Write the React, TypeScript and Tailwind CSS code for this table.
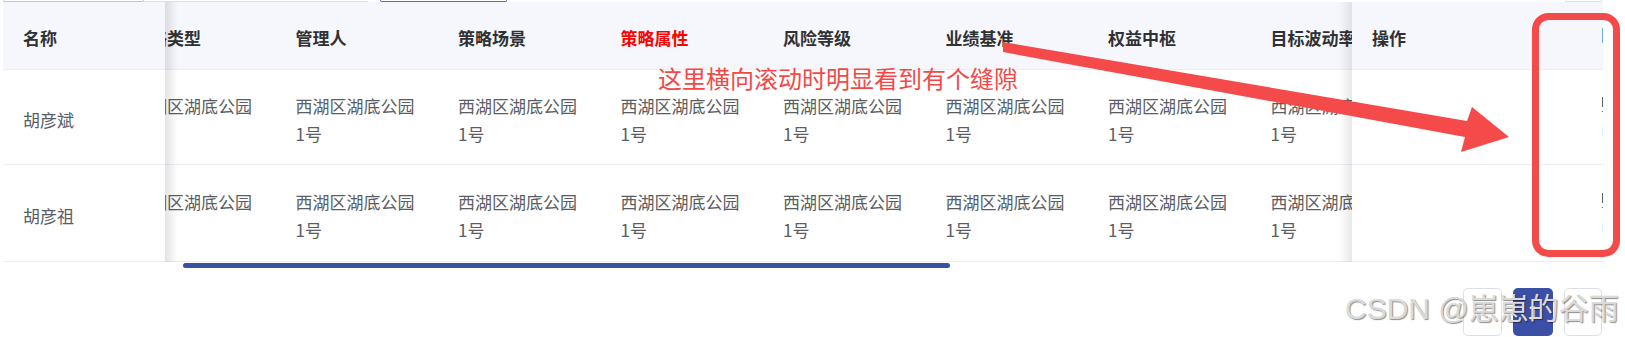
const cols = ['策略类型', '管理人', '策略场景', '策略属性', '风险等级', '业绩基准', '权益中枢', '目标波动率']
const names = ['胡彦斌', '胡彦祖']

const head =
  "flex h-[68px] shrink-0 items-center whitespace-nowrap border-b border-[#ebeef5] bg-[#f5f7fd] px-5 pt-1 text-[17px] font-bold text-[#303133]"
const cell = 'flex shrink-0 items-center border-b border-[#ebeef5] px-5 pt-[5px] text-[17px] leading-[28px] text-[#5a5d63]'
const rowH = ['h-[95px]', 'h-[97px]']

function Address() {
  return (
    <span>
      西湖区湖底公园
      <br />
      1号
    </span>
  )
}

export default function App() {
  return (
    <div className="relative h-[337px] w-[1625px] overflow-hidden bg-white font-['Noto_Sans_CJK_SC','Noto_Sans',sans-serif]">
      {/* bottoms of the filter inputs above */}
      <div className="flex h-[2px]">
        <div className="ml-[3px] w-[141px] rounded-b-[3px] border-x border-b border-[#c0c4cc]" />
        <div className="w-[224px] border-b border-[#dcdfe6]" />
        <div className="ml-[12px] w-[127px] rounded-b-[3px] border-x border-b border-[#4f6bd6]" />
        <div className="ml-auto mr-[23px] w-[37px] rounded-b-[4px] border-x border-b border-[#dcdfe6]" />
      </div>

      <div className="ml-[3px] flex w-[1600px]">
        {/* fixed left */}
        <div className="relative z-10 flex w-[162px] shrink-0 flex-col bg-white">
          <div className={head}>名称</div>
          {names.map((n, i) => (
            <div key={n} className={`${cell} ${rowH[i]}`}>
              {n}
            </div>
          ))}
          <div className="absolute left-full top-0 bottom-0 w-[13px] bg-linear-to-r from-black/[0.11] to-transparent" />
        </div>

        {/* scrolled body */}
        <div className="w-[1187px] shrink-0 overflow-hidden">
          <div className="ml-[-52px] grid w-max grid-cols-[repeat(8,162.5px)]">
            {cols.map((c) => (
              <div key={c} className={`${head} ${c === '策略属性' ? 'text-[#ff0000]' : ''}`}>
                {c}
              </div>
            ))}
            {names.map((n, i) =>
              cols.map((c) => (
                <div key={n + c} className={`${cell} ${rowH[i]}`}>
                  <Address />
                </div>
              ))
            )}
          </div>
        </div>

        {/* fixed right */}
        <div className="relative z-10 flex w-[250px] shrink-0 flex-col bg-white">
          <div className={head}>操作</div>
          <div className={`${cell} ${rowH[0]}`} />
          <div className={`${cell} ${rowH[1]}`} />
          <div className="absolute right-full top-0 bottom-0 w-[13px] bg-linear-to-l from-black/[0.09] to-transparent" />
        </div>

        {/* the 1px gap showing content underneath */}
        <div className="flex w-px shrink-0 flex-col">
          <div className="h-[68px] border-b border-[#ebeef5] bg-[#f5f7fd] pt-[26px]">
            <div className="h-[15px] bg-[#6ab4f5]" />
          </div>
          <div className="h-[95px] border-b border-[#ebeef5] pt-[27px]">
            <div className="h-[10px] bg-[#6a5a78]" />
            <div className="mt-[4px] h-px bg-[#777]" />
            <div className="mt-[14px] h-[10px] bg-[#e3f7fb]" />
          </div>
          <div className="h-[97px] border-b border-[#ebeef5] pt-[28px]">
            <div className="h-[10px] bg-[#6a5a78]" />
            <div className="mt-[4px] h-px bg-[#777]" />
            <div className="mt-[14px] h-[10px] bg-[#e3f7fb]" />
          </div>
        </div>
      </div>

      {/* horizontal scrollbar */}
      <div className="ml-[183px] mt-px h-[5px] w-[767px] rounded-full bg-[#3a50a6]" />

      {/* pagination */}
      <div className="mt-[20px] flex justify-end gap-[11px] pr-[23px]">
        <div className="h-[48px] w-[39px] rounded-[5px] border border-[#dcdfe6] bg-white" />
        <div className="flex h-[48px] w-[40px] items-center justify-center rounded-[5px] bg-[#3b4fa6] text-[17px] font-bold text-white">
          1
        </div>
        <div className="h-[48px] w-[38px] rounded-[5px] border border-[#dcdfe6] bg-white" />
      </div>

      {/* watermark */}
      <div className="pointer-events-none absolute left-[1345px] top-[291px] z-20 whitespace-nowrap font-['Liberation_Sans','Noto_Sans_CJK_SC',sans-serif] text-[30px] leading-[36px] text-[#dadada] [text-shadow:1px_1px_1px_rgba(0,0,0,0.45)]">
        CSDN @崽崽的谷雨
      </div>

      {/* red annotation */}
      <div className="pointer-events-none absolute left-[658px] top-[66px] z-20 whitespace-nowrap text-[24px] leading-[24px] text-[#f44848]">
        这里横向滚动时明显看到有个缝隙
      </div>
      <svg
        className="pointer-events-none absolute left-0 top-0 z-20"
        width="1625"
        height="337"
        viewBox="0 0 1625 337"
      >
        <polygon points="1003,42 1467,121 1472,107 1509,137 1461,152 1465,137 1003,52" fill="#f54a4a" />
        <rect x="1535.5" y="16.5" width="81" height="237" rx="13" fill="none" stroke="#f54a4a" strokeWidth="7" />
      </svg>
    </div>
  )
}
